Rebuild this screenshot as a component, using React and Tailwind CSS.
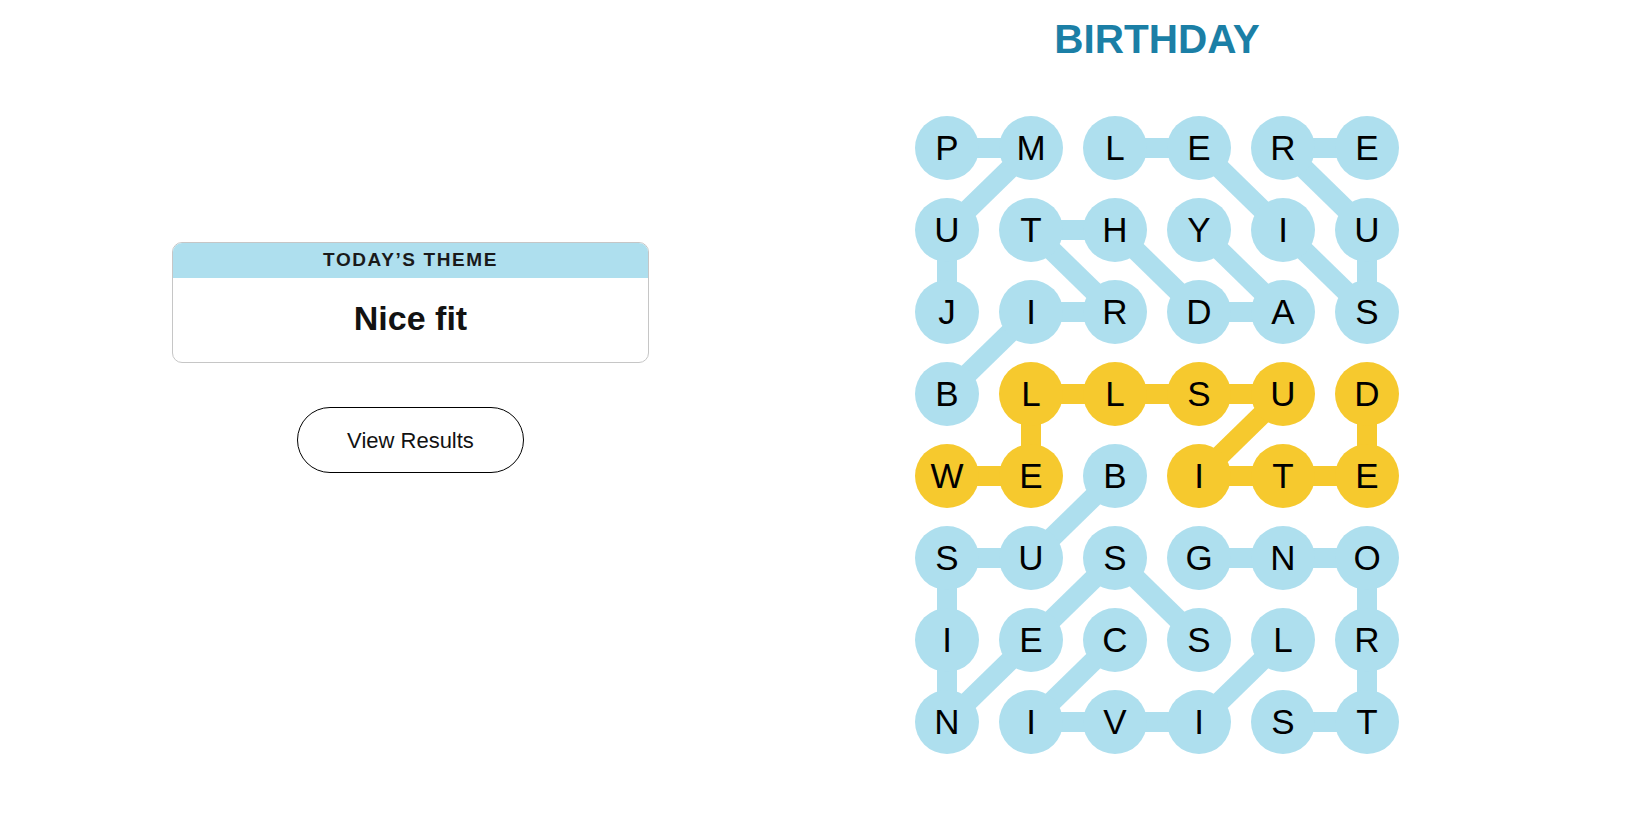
const GRID = [
  'PMLERE',
  'UTHYIU',
  'JIRDAS',
  'BLLSUD',
  'WEBITE',
  'SUSGNO',
  'IECSLR',
  'NIVIST',
]

// found words as paths of [row, col]
const WORDS = [
  { color: 'blue', path: [[2, 0], [1, 0], [0, 1], [0, 0]] },
  { color: 'blue', path: [[3, 0], [2, 1], [2, 2], [1, 1], [1, 2], [2, 3], [2, 4], [1, 3]] },
  { color: 'blue', path: [[0, 2], [0, 3], [1, 4], [2, 5], [1, 5], [0, 4], [0, 5]] },
  { color: 'yellow', path: [[4, 0], [4, 1], [3, 1], [3, 2], [3, 3], [3, 4], [4, 3], [4, 4], [4, 5], [3, 5]] },
  { color: 'blue', path: [[4, 2], [5, 1], [5, 0], [6, 0], [7, 0], [6, 1], [5, 2], [6, 3]] },
  { color: 'blue', path: [[6, 2], [7, 1], [7, 2], [7, 3], [6, 4]] },
  { color: 'blue', path: [[7, 4], [7, 5], [6, 5], [5, 5], [5, 4], [5, 3]] },
]

const FILL = { blue: '#aedfee', yellow: '#f6c92e' }
const SIZE = 64
const PX = 84
const PY = 82

const cellColor = {}
WORDS.forEach(w => w.path.forEach(([r, c]) => { cellColor[`${r}-${c}`] = w.color }))

function Board() {
  const cx = c => c * PX + SIZE / 2
  const cy = r => r * PY + SIZE / 2
  return (
    <div className="relative">
      <svg className="absolute inset-0" width={5 * PX + SIZE} height={7 * PY + SIZE}>
        {WORDS.map((w, i) =>
          w.path.slice(1).map(([r, c], j) => {
            const [pr, pc] = w.path[j]
            return (
              <line key={`${i}-${j}`} x1={cx(pc)} y1={cy(pr)} x2={cx(c)} y2={cy(r)}
                stroke={FILL[w.color]} strokeWidth="20" />
            )
          })
        )}
      </svg>
      <div className="relative grid grid-cols-[repeat(6,64px)] gap-x-[20px] gap-y-[18px]">
        {GRID.map((row, r) =>
          row.split('').map((ch, c) => (
            <div key={`${r}-${c}`}
              className={`flex h-[64px] w-[64px] items-center justify-center rounded-full text-[35px] leading-none text-black ${cellColor[`${r}-${c}`] === 'yellow' ? 'bg-[#f6c92e]' : 'bg-[#aedfee]'}`}>
              {ch}
            </div>
          ))
        )}
      </div>
    </div>
  )
}

export default function App() {
  return (
    <div className="flex h-[825px] w-[1650px] bg-white font-['Liberation_Sans',Arial,sans-serif]">
      <div className="ml-[172px] flex w-[477px] flex-col items-center pt-[242px]">
        <div className="w-full overflow-hidden rounded-[10px] border-[1.5px] border-[#c6c6c6]">
          <div className="flex h-[35px] items-center justify-center bg-[#aedfee] text-[19px] font-bold tracking-[1.6px] text-[#1a1a1a]">
            TODAY’S THEME
          </div>
          <div className="flex h-[84px] items-center justify-center pb-1 text-[34px] font-bold text-[#121212]">
            Nice fit
          </div>
        </div>
        <button type="button"
          className="mt-[44px] flex h-[66px] w-[227px] items-center justify-center rounded-full border-[1.5px] border-black text-[22px] text-[#121212]">
          View Results
        </button>
      </div>

      <div className="ml-[266px] flex w-[484px] flex-col items-center">
        <h1 className="mt-[19px] text-[40.5px] font-bold leading-none text-[#1b7fa6]">BIRTHDAY</h1>
        <div className="mt-[56px]">
          <Board />
        </div>
      </div>
    </div>
  )
}
